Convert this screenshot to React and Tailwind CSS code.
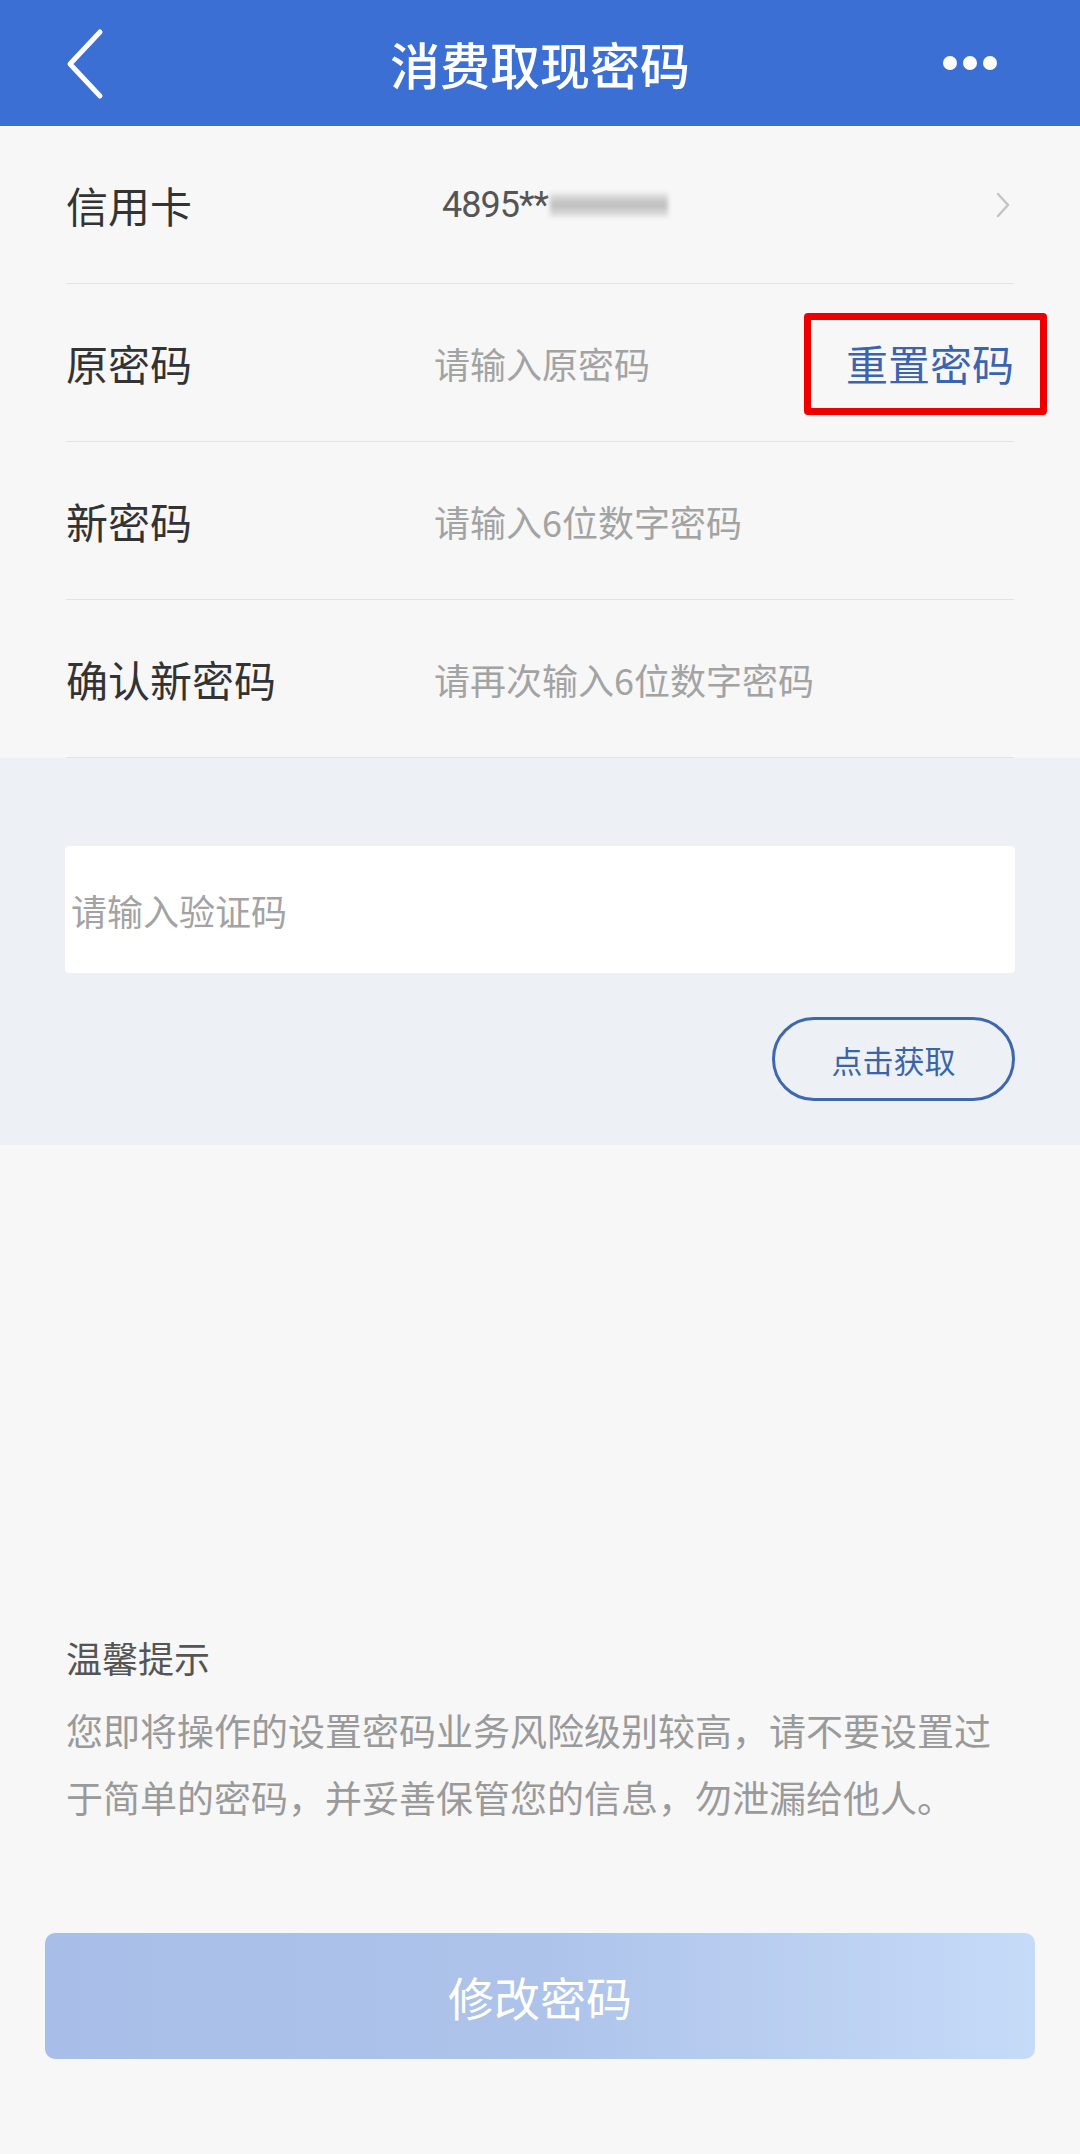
import React from "react";

const font = { fontFamily: '"Noto Sans CJK SC", "Noto Sans", sans-serif' };

function Row({ label, children }) {
  return (
    <div className="relative h-[158px] px-[66px]">
      <div className="flex h-full items-center border-b border-[#e3e3e3]">
        <div className="w-[368px] text-[42px] leading-none text-[#333333]">{label}</div>
        <div className="flex flex-1 items-center">{children}</div>
      </div>
    </div>
  );
}

export default function App() {
  return (
    <div className="flex min-h-[2154px] w-[1080px] flex-col bg-[#f7f7f7]" style={font}>
      {/* Header */}
      <div className="relative flex h-[126px] items-center justify-center bg-[#3b6fd3]">
        <svg className="absolute left-[64px] top-[28px]" width="42" height="72" viewBox="0 0 42 72">
          <polyline points="36,4 6,36 36,68" fill="none" stroke="#ffffff" strokeWidth="5" strokeLinecap="round" strokeLinejoin="round" />
        </svg>
        <div className="text-[50px] font-medium leading-none text-white">消费取现密码</div>
        <div className="absolute left-[943px] top-[56px] flex gap-[6px]">
          <span className="h-[14px] w-[14px] rounded-full bg-white" />
          <span className="h-[14px] w-[14px] rounded-full bg-white" />
          <span className="h-[14px] w-[14px] rounded-full bg-white" />
        </div>
      </div>

      {/* Form rows */}
      <Row label="信用卡">
        <div className="ml-[8px] flex items-center">
          <span className="text-[36px] leading-none text-[#555555]" style={{ fontFamily: '"Roboto", "Noto Sans", sans-serif', letterSpacing: "-1px" }}>
            4895**
          </span>
          <span className="ml-[2px] h-[24px] w-[118px] bg-gradient-to-b from-[#e6e6e6] via-[#bdbdbd] to-[#e6e6e6] blur-[2px]" />
        </div>
        <svg className="ml-auto mr-[3px]" width="16" height="26" viewBox="0 0 16 26">
          <polyline points="3,2 13,13 3,24" fill="none" stroke="#c4c4c4" strokeWidth="2.5" strokeLinecap="round" strokeLinejoin="round" />
        </svg>
      </Row>
      <div className="relative">
        <Row label="原密码">
          <span className="text-[36px] leading-none text-[#a3a3a3]">请输入原密码</span>
          <span className="ml-auto text-[42px] leading-none text-[#3a64b0]">重置密码</span>
        </Row>
        <div className="pointer-events-none absolute left-[804px] top-[29px] h-[102px] w-[243px] rounded-[4px] border-[7px] border-[#ee0000]" />
      </div>
      <Row label="新密码">
        <span className="text-[36px] leading-none text-[#a3a3a3]">请输入6位数字密码</span>
      </Row>
      <Row label="确认新密码">
        <span className="text-[36px] leading-none text-[#a3a3a3]">请再次输入6位数字密码</span>
      </Row>

      {/* Verification section */}
      <div className="flex flex-col bg-[#edf0f4] px-[65px] pb-[44px] pt-[88px]">
        <div className="flex h-[127px] items-center rounded-[4px] bg-white pl-[6px]">
          <span className="text-[36px] leading-none text-[#a3a3a3]">请输入验证码</span>
        </div>
        <div className="mt-[44px] flex justify-end">
          <div className="flex h-[84px] w-[243px] items-center justify-center rounded-full border-[3px] border-[#3d67ae]">
            <span className="text-[31px] leading-none text-[#3a64a8]">点击获取</span>
          </div>
        </div>
      </div>

      {/* Tips */}
      <div className="mt-[487px] px-[66px]">
        <div className="text-[36px] leading-[50px] text-[#555555]">温馨提示</div>
        <p className="mt-[15px] w-[948px] text-[37px] leading-[67px] text-[#9a9a9a]">
          您即将操作的设置密码业务风险级别较高，请不要设置过于简单的密码，并妥善保管您的信息，勿泄漏给他人。
        </p>
      </div>

      {/* Submit */}
      <div className="mt-[102px] px-[45px]">
        <div className="flex h-[126px] items-center justify-center rounded-[10px] bg-gradient-to-r from-[#a8bee8] via-[#adc3ea] to-[#c6dbf8]">
          <span className="text-[46px] leading-none text-white">修改密码</span>
        </div>
      </div>
    </div>
  );
}
